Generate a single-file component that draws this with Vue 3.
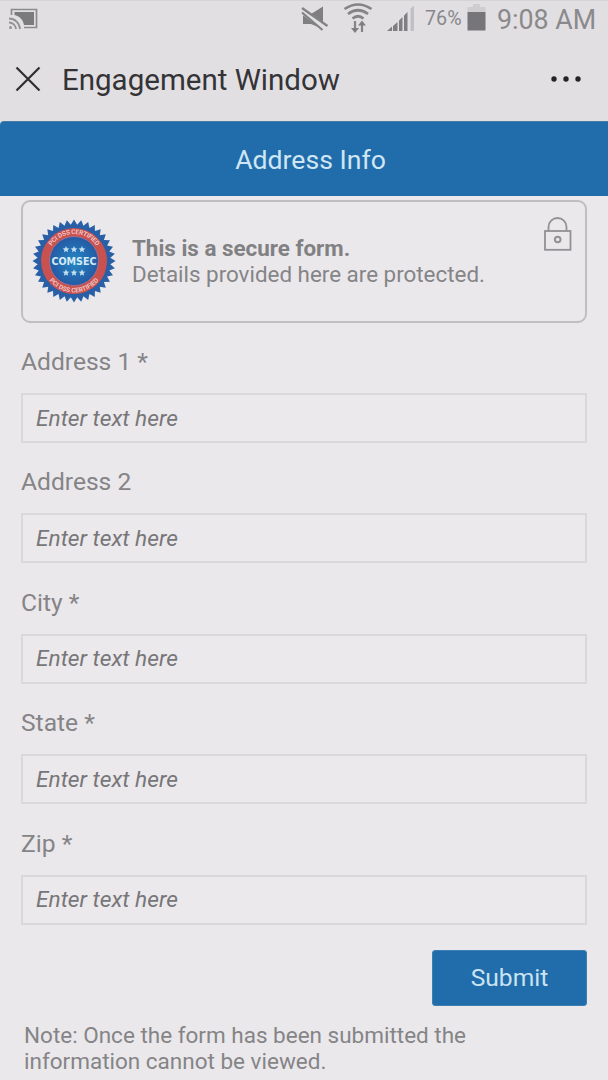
<script setup>
const fields = ['Address 1 *', 'Address 2', 'City *', 'State *', 'Zip *']

const ring = (points, cx, cy, outer, inner) =>
  Array.from({ length: points * 2 }, (_, i) => {
    const r = i % 2 === 0 ? outer : inner
    const a = (i * Math.PI) / points - Math.PI / 2
    return `${(cx + r * Math.cos(a)).toFixed(2)},${(cy + r * Math.sin(a)).toFixed(2)}`
  }).join(' ')

// Serrated outline of the certification seal, and the stars inside it
const sealPoints = ring(36, 42, 42, 41.5, 36.5)
const stars = [30.5, 53.8].flatMap((y) => [34, 42, 50].map((x) => ring(5, x, y, 3.5, 1.6)))
</script>

<template>
  <div class="screen">
    <header class="top">
      <div class="status">
        <svg class="cast" width="30" height="24" viewBox="0 0 30 24">
          <path d="M2.500 7V1.500H27.500V19.500H15" fill="none" stroke="#8b8a8d" stroke-width="1.700" />
          <path d="M5.500 4H25V17H15C14 11 10 8 5.500 7Z" fill="#7b7a7d" />
          <path d="M0 10.500A11 11 0 0 1 11 21M0 14.500A7 7 0 0 1 7 21" fill="none" stroke="#939295" stroke-width="1.800" />
          <circle cx="1.500" cy="19.500" r="1.500" fill="#939295" />
        </svg>
        <span class="grow"></span>
        <svg class="mute" width="28" height="28" viewBox="0 0 28 28">
          <path d="M2 9H10L22 1.500V24L10 19H2Z" fill="#7f7e81" />
          <path d="M0 5L26 24" stroke="#e1dfe2" stroke-width="6" />
          <path d="M1 3L26.500 21M1 7.500L21.500 25" stroke="#828184" stroke-width="2.200" />
        </svg>
        <svg class="wifi" width="30" height="31" viewBox="0 0 30 31">
          <g fill="none" stroke="#848386" stroke-width="2.700">
            <path d="M1.500 7Q15-2 28.500 7M5 12Q15 4.500 25 12M9.500 16.500Q15 12 20.500 16.500" />
            <path d="M12 19V28M19 30V21" stroke-width="2.200" />
          </g>
          <path d="M8 26H16L12 31ZM15 23.500L19 18.500L23 23.500Z" fill="#7f7e81" />
        </svg>
        <svg class="signal" width="28" height="27" viewBox="0 0 28 27">
          <path d="M0 26L5 21.500V26Z" fill="#7f7e81" />
          <path d="M6 21L10.500 17V26H6Z" fill="#7f7e81" />
          <path d="M12 15.500L15.500 12V26H12Z" fill="#7f7e81" />
          <path d="M17 10.500L20.500 7V26H17Z" fill="#7f7e81" />
          <path d="M23.500 4L27 0.500V26H23.500Z" fill="#c1bfc3" />
        </svg>
        <span class="percent">76%</span>
        <svg class="battery" width="19" height="27" viewBox="0 0 19 27">
          <path d="M6 0H13V3H18.500V8H0.500V3H6Z" fill="#cfcdd0" />
          <rect x="0.500" y="8" width="18" height="18.500" fill="#767578" />
        </svg>
        <span class="clock">9:08 AM</span>
      </div>
      <div class="bar">
        <svg class="close" width="26" height="26" viewBox="0 0 26 26">
          <path d="M1.500 1.500L24.500 24.500M24.500 1.500L1.500 24.500" stroke="#2f2e31" stroke-width="2.200" />
        </svg>
        <h1>Engagement Window</h1>
        <svg class="more" width="32" height="8" viewBox="0 0 32 8">
          <g fill="#242326"><circle cx="4" cy="4" r="2.700" /><circle cx="16" cy="4" r="2.700" /><circle cx="28" cy="4" r="2.700" /></g>
        </svg>
      </div>
    </header>

    <div class="banner"><span>Address Info</span></div>

    <main>
      <section class="secure">
        <svg class="seal" width="84" height="84" viewBox="0 0 84 84">
          <defs>
            <radialGradient id="sealBlue">
              <stop offset="0" stop-color="#2587c5" />
              <stop offset="1" stop-color="#245aa4" />
            </radialGradient>
            <path id="arcTop" d="M15 42A27 27 0 0 1 69 42" />
            <path id="arcBottom" d="M10.500 42A31.500 31.500 0 0 0 73.500 42" />
          </defs>
          <polygon :points="sealPoints" fill="#285fa6" />
          <circle cx="42" cy="42" r="33" fill="#c9514f" />
          <circle cx="42" cy="42" r="24.500" fill="url(#sealBlue)" stroke="#ad7290" stroke-width="0.800" />
          <g class="ring-text" text-anchor="middle">
            <text><textPath href="#arcTop" startOffset="50%" textLength="53">PCI DSS CERTIFIED</textPath></text>
            <text><textPath href="#arcBottom" startOffset="50%" textLength="57">PCI DSS CERTIFIED</textPath></text>
          </g>
          <text class="brand" x="42" y="46.200" text-anchor="middle" textLength="45" lengthAdjust="spacingAndGlyphs">COMSEC</text>
          <polygon v-for="star in stars" :key="star" :points="star" fill="#c3e0f0" />
        </svg>
        <div class="copy">
          <strong>This is a secure form.</strong>
          <span>Details provided here are protected.</span>
        </div>
        <svg class="lock" width="28" height="34" viewBox="0 0 28 34">
          <g fill="none" stroke="#929194" stroke-width="1.800">
            <rect x="1" y="14" width="25.500" height="18.800" />
            <path d="M4.500 14V10A9 9 0 0 1 22.500 10V14" />
            <circle cx="13.700" cy="22.500" r="2.800" stroke-width="2" />
          </g>
        </svg>
      </section>

      <form @submit.prevent>
        <label v-for="label in fields" :key="label" class="field">
          <span class="label">{{ label }}</span>
          <input type="text" placeholder="Enter text here" />
        </label>
        <button type="submit">Submit</button>
      </form>

      <p class="note">Note: Once the form has been submitted the<br />information cannot be viewed.</p>
    </main>
  </div>
</template>

<style>
body { margin: 0; background: #eae8eb; }
</style>

<style scoped>
.screen {
  width: 608px;
  height: 1080px;
  overflow: hidden;
  background: #eae8eb;
  color: #858487;
  font-family: Roboto, "Liberation Sans", sans-serif;
}
.top {
  box-sizing: border-box;
  height: 121px;
  background: #e1dfe2;
  border-top: 1px solid #d5d3d6;
}
.status { display: flex; align-items: flex-start; height: 38px; padding: 0 12px 0 9px; }
.grow { flex: 1; }
.cast { margin-top: 7px; }
.mute { margin: 4px 14px 0 0; }
.wifi { margin: 1px 14px 0 0; }
.signal { margin: 4px 10px 0 0; }
.percent { width: 38px; margin-right: 4px; font-size: 19.700px; line-height: 36px; color: #88878a; white-space: nowrap; }
.battery { margin: 3px 11px 0 0; }
.clock { width: 99px; font-size: 26.800px; line-height: 38px; white-space: nowrap; color: #8a898c; }
.bar { display: flex; align-items: center; height: 80px; padding: 0 26px 0 15px; }
.close { flex: none; }
h1 { flex: 1; margin: 2px 0 0 21px; font-size: 29.500px; font-weight: 400; line-height: 36px; color: #343336; white-space: nowrap; }
.banner {
  display: flex;
  align-items: center;
  justify-content: center;
  box-sizing: border-box;
  height: 75px;
  padding: 0 0 0 13px;
  background: #216dac;
  border-top: 1px solid #457da6;
  border-radius: 4px 0 0 0;
  color: #d0e6f3;
  font-size: 26.600px;
}
main { padding: 4px 21px 0; }
.secure {
  display: flex;
  align-items: flex-start;
  box-sizing: border-box;
  height: 123px;
  padding: 17px 13px 0 9px;
  border: 2px solid #bfbec0;
  border-radius: 9px;
}
.seal { flex: none; }
.copy { flex: 1; display: flex; flex-direction: column; margin: 16px 0 0 16px; font-size: 22.400px; line-height: 26px; white-space: nowrap; }
.copy strong { font-weight: 700; color: #818083; }
.lock { flex: none; margin-top: -2px; }
.ring-text { font-size: 6.500px; font-weight: 700; fill: #ecc4c4; }
.brand { font-family: "DejaVu Sans", sans-serif; font-size: 11px; font-weight: 700; fill: #d6eaf5; }
form { display: flex; flex-direction: column; padding-top: 23px; }
.field { display: flex; flex-direction: column; height: 120.400px; }
.label { height: 47px; font-size: 24.600px; line-height: 32px; white-space: nowrap; }
input {
  box-sizing: border-box;
  width: 100%;
  height: 50px;
  margin: 0;
  padding: 0 13px;
  border: 2px solid #dad8db;
  border-radius: 0;
  outline: none;
  background: #ebe9ec;
  font: italic 400 22.700px Roboto, "Liberation Sans", sans-serif;
}
input::placeholder { color: #777679; opacity: 1; }
button {
  align-self: flex-end;
  width: 155px;
  height: 56px;
  margin-top: 2px;
  padding: 0;
  border: 1px solid #3c80b3;
  border-radius: 3px;
  background: #216dac;
  color: #cae3f1;
  font: 400 24.600px Roboto, "Liberation Sans", sans-serif;
}
.note { margin: 16px 0 0 3px; font-size: 22.500px; line-height: 26px; white-space: nowrap; }
</style>
